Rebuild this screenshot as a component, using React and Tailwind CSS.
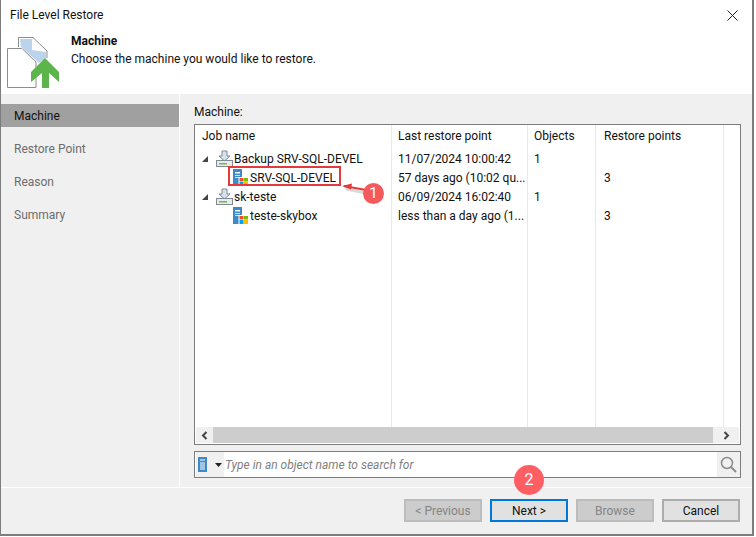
import React from 'react';

const font = { fontFamily: 'Roboto, "Noto Sans", sans-serif' };

const JobIcon = () => (
  <svg width="17" height="18" viewBox="0 0 17 18" className="shrink-0">
    <path d="M6 1h5v5h3l-5.500 5L3 6h3z" fill="#d6e2ee" stroke="#7f8a94" />
    <rect x="0.500" y="10.500" width="16" height="6" fill="#e6ecec" stroke="#7f8a94" />
    <rect x="3" y="13" width="8" height="1.500" fill="#7cb04a" />
  </svg>
);

const VmIcon = () => (
  <svg width="16" height="18" viewBox="0 0 16 18" className="shrink-0">
    <rect x="0" y="0" width="9" height="17" fill="#3e8ac6" />
    <rect x="2" y="3" width="5" height="1.500" fill="#fff" />
    <rect x="2" y="6" width="5" height="1" fill="#cfe3f3" />
    <rect x="2" y="8" width="5" height="1" fill="#cfe3f3" />
    <rect x="5.500" y="8" width="10.500" height="10" fill="#fff" />
    <rect x="6.500" y="9" width="4" height="3.500" fill="#f25022" />
    <rect x="11" y="9" width="4" height="3.500" fill="#7fba00" />
    <rect x="6.500" y="13" width="4" height="4" fill="#00a4ef" />
    <rect x="11" y="13" width="4" height="4" fill="#ffb900" />
  </svg>
);

const Expander = () => (
  <svg width="8" height="8" viewBox="0 0 8 8" className="shrink-0">
    <path d="M7 1v6H1z" fill="#444" />
  </svg>
);

const rows = [
  { name: 'Backup SRV-SQL-DEVEL', job: true, last: '11/07/2024 10:00:42', objects: '1', points: '' },
  { name: 'SRV-SQL-DEVEL', last: '57 days ago (10:02 qu...', objects: '', points: '3' },
  { name: 'sk-teste', job: true, last: '06/09/2024 16:02:40', objects: '1', points: '' },
  { name: 'teste-skybox', last: 'less than a day ago (1...', objects: '', points: '3' },
];

const steps = ['Restore Point', 'Reason', 'Summary'];

const colClass = 'grid grid-cols-[197px_136px_68px_128px_1fr]';

const App = () => {
  return (
    <div className="relative w-[756px] h-[537px] bg-white text-[12px] text-[#111]" style={font}>
      <div className="w-[754px] h-[536px] flex flex-col border-l border-r-2 border-b-2 border-[#7d7d7d]">
        <div className="h-[94px] shrink-0 bg-white relative">
          <div className="h-[30px] flex items-center justify-between pl-[9px] pr-[14px]">
            <span>File Level Restore</span>
            <svg width="11" height="11" viewBox="0 0 11 11">
              <path d="M.5.5l10 10M10.5.5l-10 10" stroke="#222" fill="none" />
            </svg>
          </div>
          <div className="flex pl-[6px] pt-[2px]">
            <svg width="54" height="54" viewBox="0 0 54 54" className="shrink-0 mt-[2px]">
              <path d="M.5 14.500H15L29 28v25.500H.5z" fill="#fff" stroke="#8c8c8c" />
              <path d="M11.500 13V3.500H26L40 17v7" fill="#fff" stroke="#8c8c8c" />
              <path d="M13 5h12v11l14 2v6l-7 5L14 13z" fill="#bcd3ec" />
              <path d="M38 24l14 14v10l-10-9v15h-7V39l-11 9V38z" fill="#5cb54a" />
            </svg>
            <div className="pl-[10px]">
              <div className="font-bold leading-[18px]">Machine</div>
              <div className="leading-[18px]">Choose the machine you would like to restore.</div>
            </div>
          </div>
        </div>

        <div className="flex-1 flex bg-[#f0f0f0] min-h-0">
          <div className="w-[179px] shrink-0 border-r border-white pt-[10px]">
            <div className="h-[23px] bg-[#a0a0a0] pl-[13px] flex items-center">Machine</div>
            {steps.map((s) => (
              <div key={s} className="h-[33px] pl-[13px] pt-[11px] leading-[23px] text-[#6d6d6d]">{s}</div>
            ))}
          </div>

          <div className="flex-1 flex flex-col pl-[14px] pr-[11px] min-w-0">
            <div className="h-[30px] pt-[9px] leading-[18px]">Machine:</div>
            <div className="h-[321px] shrink-0 border border-[#7d7d7d] bg-white flex flex-col">
              <div className="flex-1 relative min-h-0">
                <div className={`${colClass} absolute inset-0`}>
                  {[0, 1, 2, 3].map((i) => (
                    <div key={i} className="border-r border-[#e3eaf3]" />
                  ))}
                </div>
                <div className="relative">
                  <div className={`${colClass} h-[22px] items-center`}>
                    <span className="pl-[7px]">Job name</span>
                    <span className="pl-[6px]">Last restore point</span>
                    <span className="pl-[6px]">Objects</span>
                    <span className="pl-[8px]">Restore points</span>
                  </div>
                  <div className="pt-[2px]">
                    {rows.map((r) => (
                      <div key={r.name} className={`${colClass} h-[19px] items-center`}>
                        <div className={`flex items-center ${r.job ? 'pl-[6px]' : 'pl-[38px]'}`}>
                          {r.job ? (
                            <>
                              <Expander />
                              <span className="ml-[7px] mr-[1px]"><JobIcon /></span>
                            </>
                          ) : (
                            <span className="mr-[1px]"><VmIcon /></span>
                          )}
                          <span className="whitespace-nowrap">{r.name}</span>
                        </div>
                        <span className="pl-[6px] whitespace-nowrap">{r.last}</span>
                        <span className="pl-[6px]">{r.objects}</span>
                        <span className="pl-[8px]">{r.points}</span>
                      </div>
                    ))}
                  </div>
                </div>
              </div>
              <div className="h-[16px] mb-[1px] shrink-0 flex items-center bg-[#f0f0f0] mx-[1px]">
                <div className="w-[17px] flex justify-center">
                  <svg width="7" height="9" viewBox="0 0 7 9"><path d="M5.500 1L2 4.500 5.500 8" stroke="#444" strokeWidth="2" fill="none" /></svg>
                </div>
                <div className="flex-1 h-full bg-[#cdcdcd]" />
                <div className="w-[26px] flex justify-center">
                  <svg width="7" height="9" viewBox="0 0 7 9"><path d="M1.500 1L5 4.500 1.500 8" stroke="#444" strokeWidth="2" fill="none" /></svg>
                </div>
              </div>
            </div>

            <div className="mt-[6px] h-[27px] shrink-0 border border-[#7d7d7d] bg-white flex items-center">
              <div className="w-[28px] h-full bg-[#f0f0f0] flex items-center pl-[2px] gap-[8px] ml-[1px]">
                <svg width="9" height="15" viewBox="0 0 9 15">
                  <rect width="9" height="15" fill="#3e8ac6" />
                  <path d="M2 3h5M2 6h5M2 8h5M2 10h5M2 12h5" stroke="#fff" />
                </svg>
                <svg width="7" height="4" viewBox="0 0 7 4"><path d="M0 0h7L3.500 4z" fill="#222" /></svg>
              </div>
              <span className="flex-1 pl-[1px] italic text-[#7f7f7f]">Type in an object name to search for</span>
              <div className="w-[23px] h-full bg-[#f0f0f0] flex items-center justify-center">
                <svg width="17" height="17" viewBox="0 0 17 17" fill="none" stroke="#8b8b8b" strokeWidth="1.500">
                  <circle cx="7" cy="7" r="5.500" />
                  <path d="M11 11l5 5" strokeWidth="2" />
                </svg>
              </div>
            </div>
          </div>
        </div>

        <div className="h-[47px] shrink-0 bg-[#f0f0f0] border-t border-white flex items-start justify-end gap-[8px] pt-[11px] pr-[12px]">
          <div className="w-[78px] h-[23px] flex items-center justify-center border-2 border-[#bcbcbc] bg-[#cccccc] text-[#858585]">&lt; Previous</div>
          <div className="w-[78px] h-[23px] flex items-center justify-center border-2 border-[#0078d7] bg-[#e1e1e1]">Next &gt;</div>
          <div className="w-[78px] h-[23px] flex items-center justify-center border-2 border-[#bcbcbc] bg-[#cccccc] text-[#858585]">Browse</div>
          <div className="w-[78px] h-[23px] flex items-center justify-center border-2 border-[#adadad] bg-[#e1e1e1]">Cancel</div>
        </div>
      </div>

      <div className="absolute left-[228px] top-[166px] w-[113px] h-[20px] border-2 border-[#e5393b]" />
      <svg className="absolute left-[340px] top-[180px]" width="30" height="20" viewBox="0 0 30 20">
        <path d="M6 9l20 4" stroke="#000" strokeOpacity="0.150" strokeWidth="3" fill="none" />
        <path d="M4 6l22 4" stroke="#e5393b" strokeWidth="2" fill="none" />
        <path d="M2 6l10-2.500-1 6z" fill="#e5393b" />
      </svg>
      <div className="absolute left-[363px] top-[183px] w-[21px] h-[21px] rounded-full bg-[#f4595b] text-white text-[15px] flex items-center justify-center">1</div>
      <div className="absolute left-[514px] top-[465px] w-[30px] h-[30px] rounded-full bg-[#ff5f62] text-white text-[16px] flex items-center justify-center">2</div>
    </div>
  );
};

export default App;
